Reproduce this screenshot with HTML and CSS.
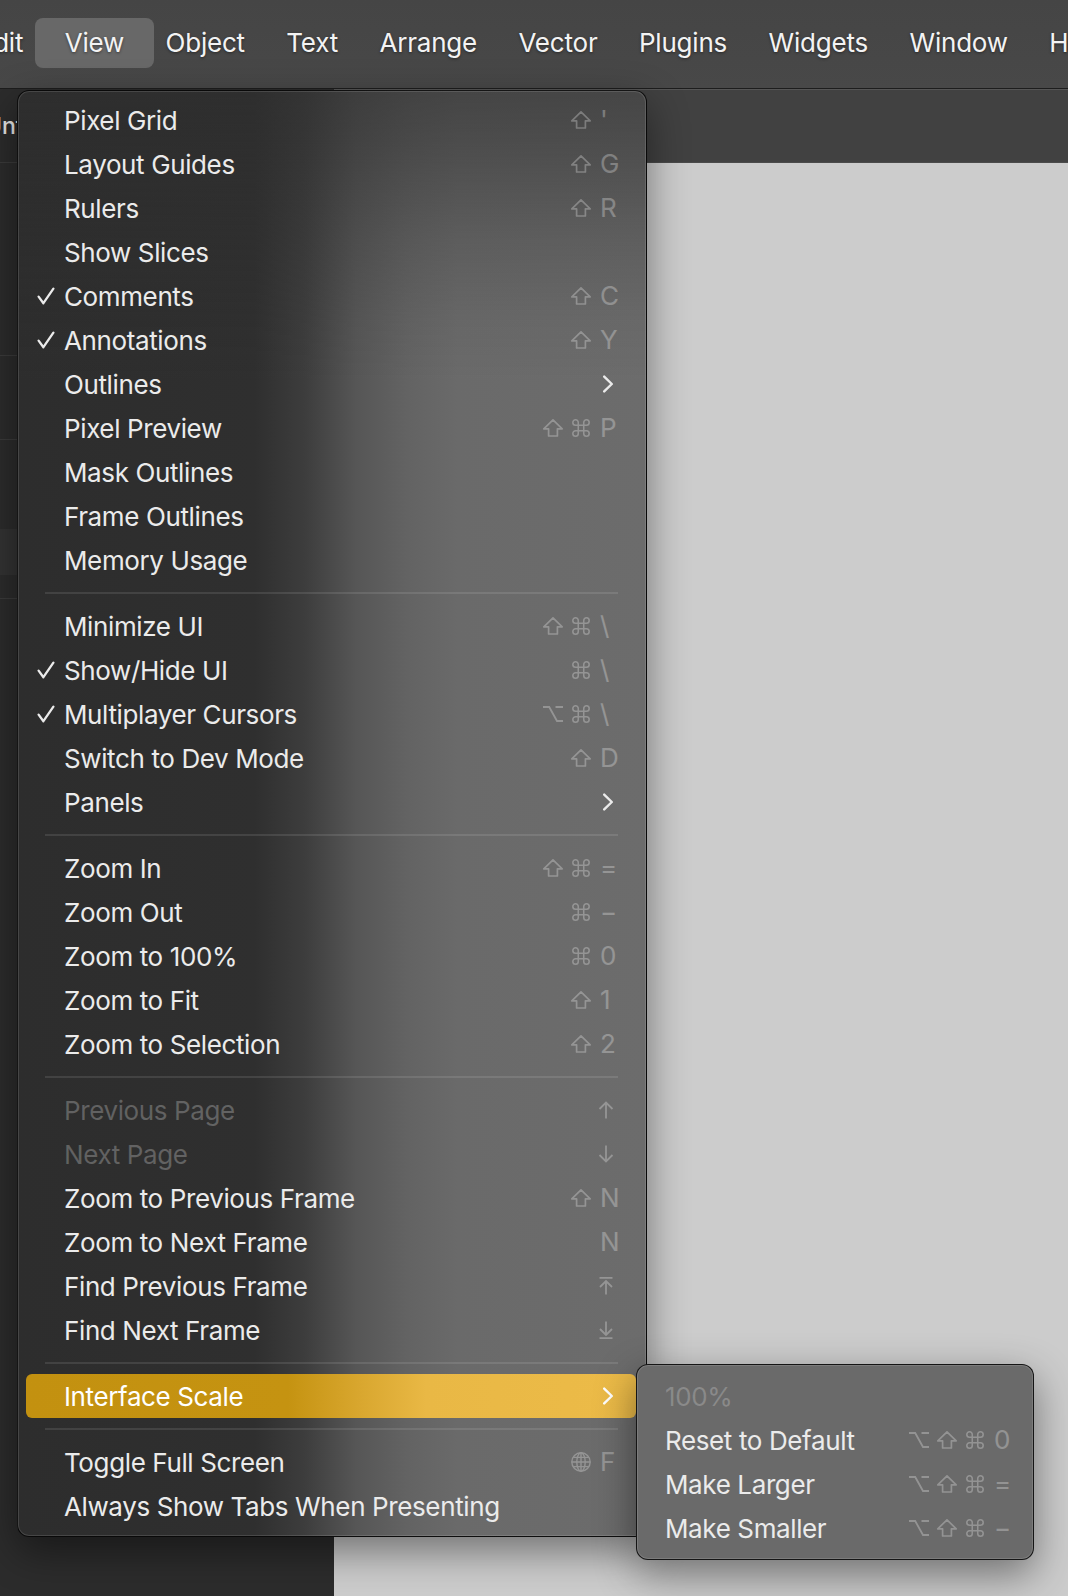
FILE: index.html
```html
<!DOCTYPE html>
<html lang="en">
<head>
<meta charset="utf-8">
<title>View menu</title>
<link rel="stylesheet" href="styles.css">
</head>
<body>
<svg class="defs" width="0" height="0" aria-hidden="true">
  <symbol id="i-shift" viewBox="0 0 22 20"><path d="M11 1.8L1.8 10.8H6.6V18H15.4V10.8H20.2Z" fill="none" stroke="currentColor" stroke-width="1.7" stroke-linejoin="round"/></symbol>
  <symbol id="i-cmd" viewBox="0 0 22 22"><path d="M8 8H14V14H8Z M8 8V5A3 3 0 1 0 5 8H8 M14 8V5A3 3 0 1 1 17 8H14 M8 14H5A3 3 0 1 0 8 17V14 M14 14H17A3 3 0 1 1 14 17V14" fill="none" stroke="currentColor" stroke-width="1.7" stroke-linejoin="round"/></symbol>
  <symbol id="i-opt" viewBox="0 0 22 20"><path d="M1 3H7.2L15 17H21M13.5 3H21" fill="none" stroke="currentColor" stroke-width="1.8"/></symbol>
  <symbol id="i-up" viewBox="0 0 16 20"><path d="M8 18.5V2.5M1.5 9L8 2.5L14.5 9" fill="none" stroke="currentColor" stroke-width="1.8"/></symbol>
  <symbol id="i-down" viewBox="0 0 16 20"><path d="M8 1.5V17.5M1.5 11L8 17.5L14.5 11" fill="none" stroke="currentColor" stroke-width="1.8"/></symbol>
  <symbol id="i-top" viewBox="0 0 16 20"><path d="M1.5 1.8H14.5M8 18.5V5M2 11L8 5L14 11" fill="none" stroke="currentColor" stroke-width="1.8"/></symbol>
  <symbol id="i-bottom" viewBox="0 0 16 20"><path d="M1.5 18.2H14.5M8 1.5V15M2 9L8 15L14 9" fill="none" stroke="currentColor" stroke-width="1.8"/></symbol>
  <symbol id="i-globe" viewBox="0 0 22 22"><g fill="none" stroke="currentColor" stroke-width="1.4"><circle cx="11" cy="11" r="9.2"/><ellipse cx="11" cy="11" rx="4.2" ry="9.2"/><path d="M1.8 11H20.2M3.4 6.4H18.6M3.4 15.6H18.6M11 1.8V20.2"/></g></symbol>
  <symbol id="i-check" viewBox="0 0 18 18"><path d="M1.6 9.6L6.4 16.2L16.4 1.6" fill="none" stroke="currentColor" stroke-width="2.3" stroke-linecap="round" stroke-linejoin="round"/></symbol>
  <symbol id="i-chev" viewBox="0 0 12 18"><path d="M2.2 1.6L9.8 9L2.2 16.4" fill="none" stroke="currentColor" stroke-width="2.4" stroke-linecap="round" stroke-linejoin="round"/></symbol>
</svg>

<div class="app">
  <header class="menubar">
    <nav class="mb-items">
      <span class="mb-item">Edit</span>
      <span class="mb-item active">View</span>
      <span class="mb-item">Object</span>
      <span class="mb-item">Text</span>
      <span class="mb-item">Arrange</span>
      <span class="mb-item">Vector</span>
      <span class="mb-item">Plugins</span>
      <span class="mb-item">Widgets</span>
      <span class="mb-item">Window</span>
      <span class="mb-item">Help</span>
    </nav>
  </header>

  <div class="workspace">
    <aside class="sidebar">
      <div class="sb-head"><span class="sb-title">Untitled</span></div>
      <div class="sb-sec sb-a"></div>
      <div class="sb-sec sb-b"></div>
      <div class="sb-sec sb-c"><div class="sb-row sel"></div></div>
      <div class="sb-rest"></div>
    </aside>
    <main class="stage">
      <div class="toolbar"></div>
      <div class="canvas"></div>
    </main>
  </div>

  <div class="menu main-menu">
    <div class="item"><span class="check"></span><span class="label">Pixel Grid</span><span class="keys"><svg class="mod"><use href="#i-shift"/></svg><span class="key">'</span></span></div>
    <div class="item"><span class="check"></span><span class="label">Layout Guides</span><span class="keys"><svg class="mod"><use href="#i-shift"/></svg><span class="key">G</span></span></div>
    <div class="item"><span class="check"></span><span class="label">Rulers</span><span class="keys"><svg class="mod"><use href="#i-shift"/></svg><span class="key">R</span></span></div>
    <div class="item"><span class="check"></span><span class="label">Show Slices</span></div>
    <div class="item"><span class="check"><svg><use href="#i-check"/></svg></span><span class="label">Comments</span><span class="keys"><svg class="mod"><use href="#i-shift"/></svg><span class="key">C</span></span></div>
    <div class="item"><span class="check"><svg><use href="#i-check"/></svg></span><span class="label">Annotations</span><span class="keys"><svg class="mod"><use href="#i-shift"/></svg><span class="key">Y</span></span></div>
    <div class="item"><span class="check"></span><span class="label">Outlines</span><span class="chev"><svg><use href="#i-chev"/></svg></span></div>
    <div class="item"><span class="check"></span><span class="label">Pixel Preview</span><span class="keys"><svg class="mod"><use href="#i-shift"/></svg><svg class="mod"><use href="#i-cmd"/></svg><span class="key">P</span></span></div>
    <div class="item"><span class="check"></span><span class="label">Mask Outlines</span></div>
    <div class="item"><span class="check"></span><span class="label">Frame Outlines</span></div>
    <div class="item"><span class="check"></span><span class="label">Memory Usage</span></div>
    <div class="sep"></div>
    <div class="item"><span class="check"></span><span class="label">Minimize UI</span><span class="keys"><svg class="mod"><use href="#i-shift"/></svg><svg class="mod"><use href="#i-cmd"/></svg><span class="key">\</span></span></div>
    <div class="item"><span class="check"><svg><use href="#i-check"/></svg></span><span class="label">Show/Hide UI</span><span class="keys"><svg class="mod"><use href="#i-cmd"/></svg><span class="key">\</span></span></div>
    <div class="item"><span class="check"><svg><use href="#i-check"/></svg></span><span class="label">Multiplayer Cursors</span><span class="keys"><svg class="mod"><use href="#i-opt"/></svg><svg class="mod"><use href="#i-cmd"/></svg><span class="key">\</span></span></div>
    <div class="item"><span class="check"></span><span class="label">Switch to Dev Mode</span><span class="keys"><svg class="mod"><use href="#i-shift"/></svg><span class="key">D</span></span></div>
    <div class="item"><span class="check"></span><span class="label">Panels</span><span class="chev"><svg><use href="#i-chev"/></svg></span></div>
    <div class="sep"></div>
    <div class="item"><span class="check"></span><span class="label">Zoom In</span><span class="keys"><svg class="mod"><use href="#i-shift"/></svg><svg class="mod"><use href="#i-cmd"/></svg><span class="key">=</span></span></div>
    <div class="item"><span class="check"></span><span class="label">Zoom Out</span><span class="keys"><svg class="mod"><use href="#i-cmd"/></svg><span class="key">−</span></span></div>
    <div class="item"><span class="check"></span><span class="label">Zoom to 100%</span><span class="keys"><svg class="mod"><use href="#i-cmd"/></svg><span class="key">0</span></span></div>
    <div class="item"><span class="check"></span><span class="label">Zoom to Fit</span><span class="keys"><svg class="mod"><use href="#i-shift"/></svg><span class="key">1</span></span></div>
    <div class="item"><span class="check"></span><span class="label">Zoom to Selection</span><span class="keys"><svg class="mod"><use href="#i-shift"/></svg><span class="key">2</span></span></div>
    <div class="sep"></div>
    <div class="item dis"><span class="check"></span><span class="label">Previous Page</span><span class="keys"><span class="key"><svg class="arrow"><use href="#i-up"/></svg></span></span></div>
    <div class="item dis"><span class="check"></span><span class="label">Next Page</span><span class="keys"><span class="key"><svg class="arrow"><use href="#i-down"/></svg></span></span></div>
    <div class="item"><span class="check"></span><span class="label">Zoom to Previous Frame</span><span class="keys"><svg class="mod"><use href="#i-shift"/></svg><span class="key">N</span></span></div>
    <div class="item"><span class="check"></span><span class="label">Zoom to Next Frame</span><span class="keys"><span class="key">N</span></span></div>
    <div class="item"><span class="check"></span><span class="label">Find Previous Frame</span><span class="keys"><span class="key"><svg class="arrow"><use href="#i-top"/></svg></span></span></div>
    <div class="item"><span class="check"></span><span class="label">Find Next Frame</span><span class="keys"><span class="key"><svg class="arrow"><use href="#i-bottom"/></svg></span></span></div>
    <div class="sep"></div>
    <div class="item hl"><span class="check"></span><span class="label">Interface Scale</span><span class="chev"><svg><use href="#i-chev"/></svg></span></div>
    <div class="sep"></div>
    <div class="item"><span class="check"></span><span class="label">Toggle Full Screen</span><span class="keys"><svg class="mod globe"><use href="#i-globe"/></svg><span class="key">F</span></span></div>
    <div class="item"><span class="check"></span><span class="label">Always Show Tabs When Presenting</span></div>
  </div>

  <div class="menu sub-menu">
    <div class="item dis"><span class="check"></span><span class="label">100%</span></div>
    <div class="item"><span class="check"></span><span class="label">Reset to Default</span><span class="keys"><svg class="mod"><use href="#i-opt"/></svg><svg class="mod"><use href="#i-shift"/></svg><svg class="mod"><use href="#i-cmd"/></svg><span class="key">0</span></span></div>
    <div class="item"><span class="check"></span><span class="label">Make Larger</span><span class="keys"><svg class="mod"><use href="#i-opt"/></svg><svg class="mod"><use href="#i-shift"/></svg><svg class="mod"><use href="#i-cmd"/></svg><span class="key">=</span></span></div>
    <div class="item"><span class="check"></span><span class="label">Make Smaller</span><span class="keys"><svg class="mod"><use href="#i-opt"/></svg><svg class="mod"><use href="#i-shift"/></svg><svg class="mod"><use href="#i-cmd"/></svg><span class="key">−</span></span></div>
  </div>
</div>
</body>
</html>
```

FILE: styles.css
```css
* { box-sizing: border-box; }

html, body {
  margin: 0;
  padding: 0;
}

body {
  width: 1068px;
  height: 1596px;
  overflow: hidden;
  background: #2c2c2c;
  font-family: "Inter", "Liberation Sans", sans-serif;
  -webkit-font-smoothing: antialiased;
}

.defs {
  position: absolute;
  width: 0;
  height: 0;
  overflow: hidden;
}

.app {
  position: relative;
  width: 1068px;
  height: 1596px;
  overflow: hidden;
}

/* ---------- menu bar ---------- */
.menubar {
  height: 89px;
  border-bottom: 1px solid #1d1d1d;
  background: linear-gradient(#454545, #484848);
  display: flex;
  align-items: center;
  padding-bottom: 2px;
}

.mb-items {
  display: flex;
  align-items: center;
  margin-left: -43px;
}

.mb-item {
  height: 50px;
  line-height: 50px;
  padding: 0 30px;
  margin: 0 -9.3px;
  border-radius: 8px;
  font-size: 26px;
  letter-spacing: -0.2px;
  color: #f3f3f3;
  white-space: nowrap;
  text-shadow: 0 1px 3px rgba(0, 0, 0, 0.45);
}

.mb-item.active {
  background: #686868;
}

/* ---------- workspace underneath ---------- */
.workspace {
  display: flex;
  height: 1507px;
}

.sidebar {
  width: 334px;
  flex: none;
  background: #2c2c2c;
  display: flex;
  flex-direction: column;
}

.sb-head {
  height: 74px;
  border-bottom: 1px solid #3b3b3b;
  display: flex;
  align-items: center;
  overflow: hidden;
}

.sb-title {
  margin-left: -15px;
  font-size: 23px;
  font-weight: 500;
  color: #e6e6e6;
}

.sb-sec {
  border-bottom: 1px solid #3b3b3b;
}

.sb-a { height: 193px; }
.sb-b { height: 84px; }
.sb-c {
  height: 159px;
  padding-top: 89px;
}

.sb-row {
  height: 46px;
}

.sb-row.sel {
  background: #333333;
}

.sb-rest {
  flex: 1;
}

.stage {
  flex: 1;
  display: flex;
  flex-direction: column;
}

.toolbar {
  height: 74px;
  border-top: 1px solid #555555;
  border-bottom: 1px solid #4b4b4b;
  background: #414141;
}

.canvas {
  flex: 1;
  background: #cccccc;
}

/* ---------- menus ---------- */
.menu {
  position: absolute;
  border: 1px solid rgba(0, 0, 0, 0.8);
  border-radius: 12px;
  box-shadow: inset 0 0 0 1px rgba(255, 255, 255, 0.12), 0 14px 40px rgba(0, 0, 0, 0.45);
}

.main-menu {
  left: 17px;
  top: 90px;
  width: 630px;
  padding: 7px 0 8px;
  background:
    linear-gradient(180deg, rgba(46, 46, 46, 0.62) 0px, rgba(46, 46, 46, 0.5) 50px, rgba(46, 46, 46, 0.22) 150px, rgba(46, 46, 46, 0.06) 230px, rgba(46, 46, 46, 0) 290px),
    linear-gradient(90deg, #2d2d2d 0px, #2f2f2f 237px, #3d3d3d 287px, #565656 338px, #636363 389px, #6a6a6a 440px, #6c6c6c 100%);
}

.sub-menu {
  left: 636px;
  top: 1364px;
  width: 398px;
  padding: 9px 0;
  background: #6a6a6a;
}

.item {
  display: flex;
  align-items: center;
  height: 44px;
  margin: 0 10px 0 8px;
  padding-right: 17px;
  border-radius: 6px;
  font-size: 26px;
  letter-spacing: -0.38px;
  color: #ebebeb;
  white-space: nowrap;
}

.sub-menu .item {
  padding-right: 10px;
}

.check {
  flex: none;
  width: 38px;
  padding-left: 11px;
  display: flex;
  align-items: center;
}

.sub-menu .check {
  width: 20px;
  padding-left: 0;
}

.check svg {
  width: 18px;
  height: 18px;
  color: #ebebeb;
}

.label {
  flex: 1;
}

.keys {
  display: flex;
  align-items: center;
  color: #ffffff;
  opacity: 0.28;
  letter-spacing: 0;
}

.mod {
  flex: none;
  width: 22px;
  height: 20px;
  margin-right: 6px;
}

.mod.globe {
  height: 22px;
}

.key {
  flex: none;
  width: 19px;
  margin-left: 2px;
  font-size: 26px;
  line-height: 1;
  display: flex;
  align-items: center;
}

.arrow {
  width: 16px;
  height: 20px;
  margin-left: -2px;
}

.chev {
  flex: none;
  width: 19px;
  padding-left: 2px;
  display: flex;
  align-items: center;
  color: #ebebeb;
}

.chev svg {
  width: 12px;
  height: 18px;
}

.item.dis {
  color: rgba(255, 255, 255, 0.25);
}

.sub-menu .item.dis {
  color: rgba(255, 255, 255, 0.22);
}

.item.hl {
  color: #ffffff;
  background: linear-gradient(90deg, #c39110 0px, #c59311 262px, #d9a72f 335px, #e9b845 400px, #ecbb48 100%);
}

.item.hl .chev {
  color: #ffffff;
}

.sep {
  height: 2px;
  margin: 10px 28px 10px 27px;
  background: rgba(255, 255, 255, 0.1);
}
```
